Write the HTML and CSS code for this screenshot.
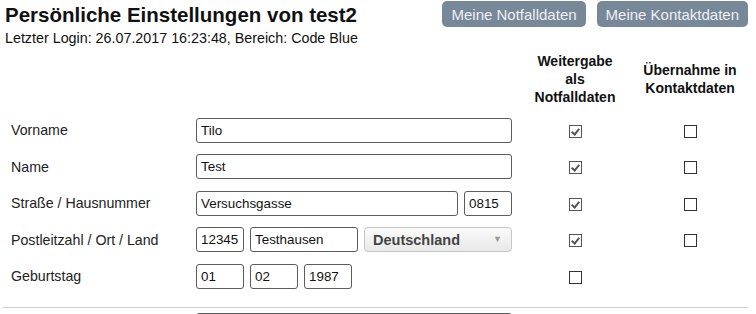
FILE: index.html
```html
<!DOCTYPE html>
<html lang="de">
<head>
    <meta charset="UTF-8">
    <meta name="viewport" content="width=device-width, initial-scale=1.0">
    <title>Persönliche Einstellungen</title>
    <link rel="stylesheet" href="styles.css">
</head>
<body>
<div class="page">
    <div class="header">
        <div class="title-block">
            <h1>Persönliche Einstellungen von test2</h1>
            <p class="last-login">Letzter Login: 26.07.2017 16:23:48, Bereich: Code Blue</p>
        </div>
        <div class="actions">
            <button class="btn">Meine Notfalldaten</button>
            <button class="btn">Meine Kontaktdaten</button>
        </div>
    </div>

    <table class="settings">
        <thead>
            <tr>
                <th class="col-label"></th>
                <th class="col-field"></th>
                <th class="col-check">Weitergabe<br>als<br>Notfalldaten</th>
                <th class="col-check2">Übernahme in<br>Kontaktdaten</th>
            </tr>
        </thead>
        <tbody>
            <tr>
                <td class="label">Vorname</td>
                <td><div class="fields"><input class="w-full" type="text" value="Tilo"></div></td>
                <td class="check"><input type="checkbox" checked></td>
                <td class="check"><input type="checkbox"></td>
            </tr>
            <tr>
                <td class="label">Name</td>
                <td><div class="fields"><input class="w-full" type="text" value="Test"></div></td>
                <td class="check"><input type="checkbox" checked></td>
                <td class="check"><input type="checkbox"></td>
            </tr>
            <tr>
                <td class="label">Straße / Hausnummer</td>
                <td>
                    <div class="fields">
                        <input class="w-street" type="text" value="Versuchsgasse">
                        <input class="w-small" type="text" value="0815">
                    </div>
                </td>
                <td class="check"><input type="checkbox" checked></td>
                <td class="check"><input type="checkbox"></td>
            </tr>
            <tr>
                <td class="label">Postleitzahl / Ort / Land</td>
                <td>
                    <div class="fields">
                        <input class="w-small" type="text" value="12345">
                        <input class="w-city" type="text" value="Testhausen">
                        <span class="select-wrap">
                            <select class="country">
                                <option>Deutschland</option>
                                <option>Österreich</option>
                                <option>Schweiz</option>
                            </select>
                        </span>
                    </div>
                </td>
                <td class="check"><input type="checkbox" checked></td>
                <td class="check"><input type="checkbox"></td>
            </tr>
            <tr>
                <td class="label">Geburtstag</td>
                <td>
                    <div class="fields">
                        <input class="w-small" type="text" value="01">
                        <input class="w-small" type="text" value="02">
                        <input class="w-small" type="text" value="1987">
                    </div>
                </td>
                <td class="check"><input type="checkbox"></td>
                <td class="check"></td>
            </tr>
        </tbody>
    </table>

    <div class="divider"></div>

    <div class="next-row">
        <input class="w-full" type="text" value="">
    </div>
</div>
</body>
</html>
```

FILE: styles.css
```css
body {
    margin: 0;
    padding: 0;
    font-family: "Liberation Sans", Arial, sans-serif;
    color: #111;
    background: #fff;
    overflow: hidden;
}
.page {
    padding: 0 8px 0 5px;
}
.header {
    display: flex;
    justify-content: space-between;
    align-items: flex-start;
}
h1 {
    margin: 0;
    padding-top: 1px;
    font-size: 20.5px;
    line-height: 28px;
    font-weight: bold;
}
.last-login {
    margin: 0;
    font-size: 14.3px;
    line-height: 18px;
    color: #111;
}
.actions {
    display: flex;
    gap: 11px;
    margin-top: 1px;
}
.btn {
    height: 26px;
    padding: 0 9px;
    border: none;
    border-radius: 5px;
    background-color: #778899;
    color: #eef0f2;
    font-family: "Liberation Sans", Arial, sans-serif;
    font-size: 15px;
    cursor: pointer;
}
.settings {
    margin-top: 1px;
    border-collapse: collapse;
    width: 743px;
}
.settings th {
    padding: 4px 0 6px;
    font-size: 14px;
    line-height: 18px;
    font-weight: bold;
    text-align: center;
    vertical-align: middle;
}
.col-label { width: 191px; }
.col-field { width: 322px; }
.col-check { width: 114px; }
.col-check2 { width: 116px; }
.settings td {
    height: 36.5px;
    padding: 0;
    vertical-align: middle;
}
.settings td.label {
    padding-left: 6px;
    font-size: 14.2px;
    color: #222;
}
.settings td.check {
    text-align: center;
}
.fields {
    display: flex;
    gap: 6px;
    align-items: center;
}
input[type="text"] {
    box-sizing: border-box;
    height: 25px;
    padding: 0 4px;
    border: 1px solid #5c5c5c;
    border-radius: 3px;
    font-family: "Liberation Sans", Arial, sans-serif;
    font-size: 13.4px;
    color: #111;
    background: #fff;
}
.w-full { width: 316px; }
.w-street { width: 262px; }
.w-small { width: 48px; }
.w-city { width: 108px; }
.select-wrap {
    position: relative;
    display: inline-block;
}
.select-wrap::after {
    content: "▼";
    position: absolute;
    right: 10px;
    top: 7px;
    font-size: 9px;
    color: #999;
    pointer-events: none;
}
.country {
    appearance: none;
    -webkit-appearance: none;
    box-sizing: border-box;
    width: 148px;
    height: 25px;
    padding: 0 0 0 8px;
    border: 1px solid #c6c6c6;
    border-radius: 4px;
    background: linear-gradient(#fbfbfb, #e8e8e8);
    font-family: "Liberation Sans", Arial, sans-serif;
    font-size: 14.5px;
    font-weight: bold;
    color: #444;
}
input[type="checkbox"] {
    appearance: none;
    -webkit-appearance: none;
    position: relative;
    width: 13px;
    height: 13px;
    margin: 0;
    border: 1px solid #333;
    background: #fff;
    vertical-align: middle;
}
input[type="checkbox"]:checked {
    border-color: #555;
}
input[type="checkbox"]:checked::after {
    content: "";
    position: absolute;
    left: 3px;
    top: 1px;
    width: 3px;
    height: 6px;
    border: solid #555;
    border-width: 0 2px 2px 0;
    transform: rotate(40deg);
}
.divider {
    margin: 12px 0 0 -2px;
    border-top: 1px solid #cfcfcf;
}
.next-row {
    padding: 5px 0 0 191px;
}
```
